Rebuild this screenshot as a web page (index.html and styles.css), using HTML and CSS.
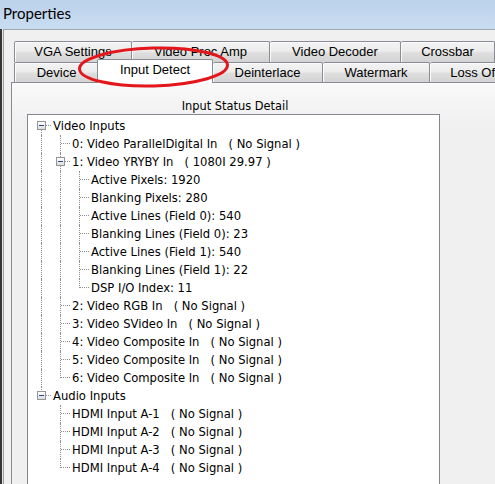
FILE: index.html
```html
<!DOCTYPE html>
<html>
<head>
<meta charset="utf-8">
<link rel="stylesheet" href="styles.css">
</head>
<body>
<div class="titlebar"><span class="title">Properties</span></div>
<div class="client">
  <div class="tabs">
    <div class="tabrow row1">
      <div class="tab first w118">VGA Settings</div>
      <div class="tab w138">Video Proc Amp</div>
      <div class="tab w131">Video Decoder</div>
      <div class="tab w94">Crossbar</div>
    </div>
    <div class="tabrow row2">
      <div class="tab first w85">Device</div>
      <div class="tab sel">Input Detect</div>
      <div class="tab w110">Deinterlace</div>
      <div class="tab w107">Watermark</div>
      <div class="tab w126">Loss Of Signal</div>
    </div>
  </div>
  <div class="page">
    <div class="caption">Input Status Detail</div>
    <div class="tree">
      <div class="row"><span class="c r0"><span class="x"></span></span><span class="txt">Video Inputs</span></div>
      <div class="row"><span class="c i"></span><span class="c t"></span><span class="txt">0: Video ParallelDigital In   ( No Signal )</span></div>
      <div class="row"><span class="c i"></span><span class="c t"><span class="x"></span></span><span class="txt">1: Video YRYBY In   ( 1080I 29.97 )</span></div>
      <div class="row"><span class="c i"></span><span class="c i"></span><span class="c t"></span><span class="txt">Active Pixels: 1920</span></div>
      <div class="row"><span class="c i"></span><span class="c i"></span><span class="c t"></span><span class="txt">Blanking Pixels: 280</span></div>
      <div class="row"><span class="c i"></span><span class="c i"></span><span class="c t"></span><span class="txt">Active Lines (Field 0): 540</span></div>
      <div class="row"><span class="c i"></span><span class="c i"></span><span class="c t"></span><span class="txt">Blanking Lines (Field 0): 23</span></div>
      <div class="row"><span class="c i"></span><span class="c i"></span><span class="c t"></span><span class="txt">Active Lines (Field 1): 540</span></div>
      <div class="row"><span class="c i"></span><span class="c i"></span><span class="c t"></span><span class="txt">Blanking Lines (Field 1): 22</span></div>
      <div class="row"><span class="c i"></span><span class="c i"></span><span class="c e"></span><span class="txt">DSP I/O Index: 11</span></div>
      <div class="row"><span class="c i"></span><span class="c t"></span><span class="txt">2: Video RGB In   ( No Signal )</span></div>
      <div class="row"><span class="c i"></span><span class="c t"></span><span class="txt">3: Video SVideo In   ( No Signal )</span></div>
      <div class="row"><span class="c i"></span><span class="c t"></span><span class="txt">4: Video Composite In   ( No Signal )</span></div>
      <div class="row"><span class="c i"></span><span class="c t"></span><span class="txt">5: Video Composite In   ( No Signal )</span></div>
      <div class="row"><span class="c i"></span><span class="c e"></span><span class="txt">6: Video Composite In   ( No Signal )</span></div>
      <div class="row"><span class="c e"><span class="x"></span></span><span class="txt">Audio Inputs</span></div>
      <div class="row"><span class="c"></span><span class="c t"></span><span class="txt">HDMI Input A-1   ( No Signal )</span></div>
      <div class="row"><span class="c"></span><span class="c t"></span><span class="txt">HDMI Input A-2   ( No Signal )</span></div>
      <div class="row"><span class="c"></span><span class="c t"></span><span class="txt">HDMI Input A-3   ( No Signal )</span></div>
      <div class="row"><span class="c"></span><span class="c e"></span><span class="txt">HDMI Input A-4   ( No Signal )</span></div>
    </div>
  </div>
</div>
<svg class="callout" width="495" height="100" viewBox="0 0 495 100">
  <ellipse cx="153.5" cy="67" rx="74" ry="19" fill="none" stroke="#e3161c" stroke-width="3" transform="rotate(-1.5 153.5 67)"/>
</svg>
</body>
</html>
```
FILE: styles.css
```css
* { box-sizing: border-box; }
html, body { margin: 0; padding: 0; }
body {
  width: 495px;
  height: 484px;
  overflow: hidden;
  position: relative;
  background: linear-gradient(to right, #363636 0, #363636 2px, #e4e4e4 2px, #e4e4e4 3px, #f0f0f0 3px);
  font-family: "Liberation Sans", Arial, sans-serif;
  color: #000;
}
.titlebar {
  height: 29px;
  background: linear-gradient(#bcd2eb, #c9dcf1);
  padding: 3px 0 0 3px;
  font-family: Lato, "Open Sans", sans-serif;
  font-size: 15px;
  line-height: 20px;
  color: #000;
}
.client {
  margin-left: 3px;
  border-top: 1px solid #9fa9b5;
  border-left: 1px solid #a2a2a2;
  padding: 11px 0 0 7px;
  height: 455px;
}
.tabs { padding-left: 3px; }
.tabrow { display: flex; }
.row1 { height: 21px; }
.row2 { height: 20px; }
.tab {
  flex: none;
  height: 100%;
  border-top: 1px solid #898c95;
  border-right: 1px solid #898c95;
  border-radius: 2px 2px 0 0;
  background: linear-gradient(#f3f3f3, #ececec 45%, #dedede 55%, #d3d3d3);
  box-shadow: inset 1px 1px 0 #fbfbfb;
  text-align: center;
  font-size: 13px;
  line-height: 19px;
  white-space: nowrap;
  overflow: hidden;
}
.tab.first { border-left: 1px solid #898c95; }
.tab.sel {
  width: 116px;
  height: 24px;
  margin-top: -3px;
  margin-left: -2px;
  border-left: 1px solid #898c95;
  background: #fff;
  box-shadow: none;
  line-height: 20px;
  position: relative;
  z-index: 1;
}
.w85 { width: 85px; }
.w94 { width: 94px; }
.w107 { width: 107px; }
.w110 { width: 110px; }
.w118 { width: 118px; }
.w126 { width: 126px; }
.w131 { width: 131px; }
.w138 { width: 138px; }
.page {
  border-top: 1px solid #898c95;
  border-left: 1px solid #898c95;
  background: linear-gradient(#f9f9f9, #f0f0f0 40px);
  padding: 16px 0 0 15px;
  height: 420px;
}
.caption {
  width: 413px;
  height: 15px;
  padding-left: 3px;
  text-align: center;
  font-family: "DejaVu Sans", sans-serif;
  font-size: 11.4px;
  line-height: 15px;
}
.tree {
  width: 413px;
  height: 400px;
  border: 1px solid #828790;
  background: #fff;
  padding: 2px 0 0 4px;
  font-family: "DejaVu Sans", sans-serif;
  font-size: 11.6px;
}
.row { display: flex; height: 18px; line-height: 18px; }
.c { flex: none; width: 19px; height: 18px; position: relative; }
.c::before, .c::after { content: none; position: absolute; }
.i::before, .t::before {
  content: "";
  left: 9px; top: 0; bottom: 0;
  border-left: 1px dotted #8e8e8e;
}
.e::before {
  content: "";
  left: 9px; top: 0; height: 9px;
  border-left: 1px dotted #8e8e8e;
}
.r0::before {
  content: "";
  left: 9px; top: 8px; bottom: 0;
  border-left: 1px dotted #8e8e8e;
}
.t::after, .e::after, .r0::after {
  content: "";
  left: 10px; right: 0; top: 8px;
  border-top: 1px dotted #8e8e8e;
}
.x {
  position: absolute;
  z-index: 1;
  left: 5px; top: 4px;
  width: 9px; height: 9px;
  border: 1px solid #959595;
  background: linear-gradient(#ffffff, #dcdcdc);
}
.x::after {
  content: "";
  position: absolute;
  left: 1px; top: 3px;
  width: 5px; height: 1px;
  background: #2c4a86;
}
.txt { margin-left: 2px; white-space: pre; }
.callout {
  position: absolute;
  left: 0; top: 0;
  pointer-events: none;
  z-index: 5;
}
```
